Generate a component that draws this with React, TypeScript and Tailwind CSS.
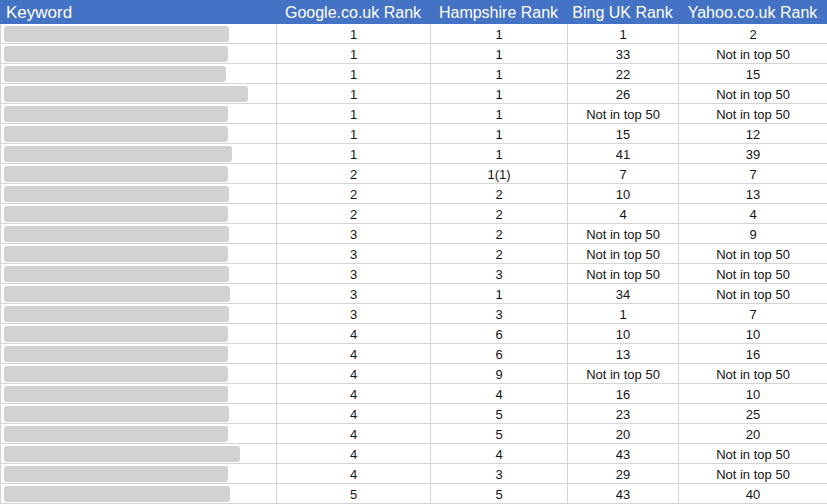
const rows: [number, string, string, string, string][] = [
  [225, "1", "1", "1", "2"],
  [224, "1", "1", "33", "Not in top 50"],
  [222, "1", "1", "22", "15"],
  [244, "1", "1", "26", "Not in top 50"],
  [224, "1", "1", "Not in top 50", "Not in top 50"],
  [224, "1", "1", "15", "12"],
  [228, "1", "1", "41", "39"],
  [224, "2", "1(1)", "7", "7"],
  [225, "2", "2", "10", "13"],
  [224, "2", "2", "4", "4"],
  [225, "3", "2", "Not in top 50", "9"],
  [224, "3", "2", "Not in top 50", "Not in top 50"],
  [225, "3", "3", "Not in top 50", "Not in top 50"],
  [226, "3", "1", "34", "Not in top 50"],
  [225, "3", "3", "1", "7"],
  [224, "4", "6", "10", "10"],
  [224, "4", "6", "13", "16"],
  [224, "4", "9", "Not in top 50", "Not in top 50"],
  [224, "4", "4", "16", "10"],
  [225, "4", "5", "23", "25"],
  [224, "4", "5", "20", "20"],
  [236, "4", "4", "43", "Not in top 50"],
  [224, "4", "3", "29", "Not in top 50"],
  [226, "5", "5", "43", "40"],
];

const cols = "grid grid-cols-[276px_154px_137px_111px_149px]";

export default function App() {
  return (
    <div className="h-[504px] w-[827px] overflow-hidden bg-white font-['Liberation_Sans',Arial,sans-serif]">
      <div className={`${cols} h-6 items-center bg-[#4472c4] text-[16px] text-white`}>
        <div className="pl-[6px] text-[17px]">Keyword</div>
        <div className="text-center">Google.co.uk Rank</div>
        <div className="text-center">Hampshire Rank</div>
        <div className="text-center">Bing UK Rank</div>
        <div className="text-center">Yahoo.co.uk Rank</div>
      </div>
      <div className="border-l border-[#d4d4d4]">
        {rows.map((r, i) => (
          <div key={i} className={`${cols} h-5 text-[13px] text-[#141414]`}>
            <div className="flex h-5 items-center border-b border-r border-[#d4d4d4] pl-[3px] pt-[1px]">
              <div
                className="h-[16px] rounded-[3px] bg-[#d2d2d2] blur-[0.6px]"
                style={{ width: r[0] }}
              />
            </div>
            {r.slice(1).map((v, j) => (
              <div
                key={j}
                className="flex h-5 items-center justify-center border-b border-r border-[#d4d4d4] pt-[2px] leading-none"
              >
                {v}
              </div>
            ))}
          </div>
        ))}
      </div>
    </div>
  );
}
